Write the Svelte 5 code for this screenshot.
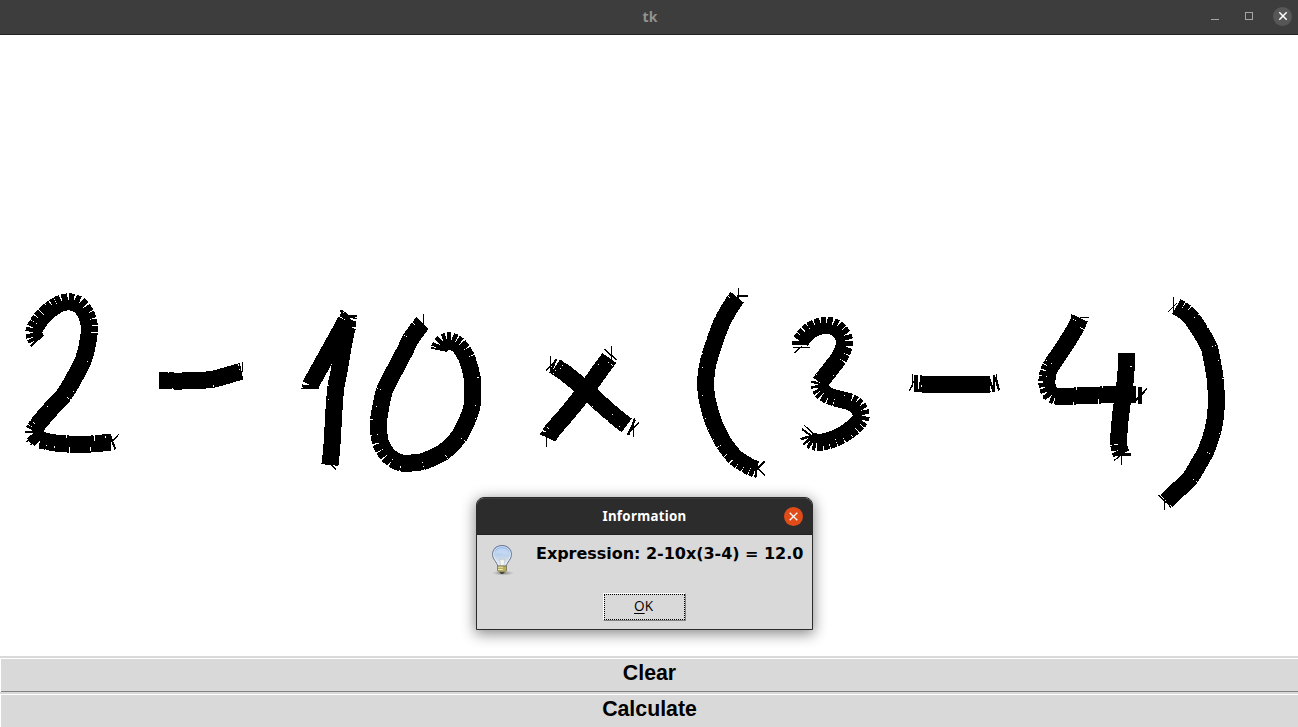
<script>
  // Each stroke is a list of x,y samples in thirds of a pixel, offset by its group's origin.
  const glyphs = [
    { x: 0, y: 280, strokes: [
      '109,180 104,170 101,158 104,146 112,132 121,119 133,106 150,90 160,82 172,75 187,68 205,65 221,67 235,73 248,85 258,102 265,120 268,138 268,157 261,200 250,240 237,267 205,325 192,345 152,388 120,425 111,436 104,446 100,453 100,459 105,465 112,472 121,480 142,485 165,489 197,491 210,493 270,493 285,490 308,489 318,488 332,487',
      '478,301 503,301 520,303 548,303 605,301 637,298 706,279 720,275 725,274'],
      hairs: ['90,198 128,162', '93,200 130,165', '338,483 356,463', '327,463 345,508', '330,463 347,508', '727,247 727,275', '79,487 100,465', '92,495 106,472'] },
    { x: 290, y: 290, strokes: [
      '60,295 61,286 69,271 157,112 168,92 176,82 177,78',
      '173,92 173,110 168,126 146,250 138,290 134,330 124,490 122,506 120,525'],
      hairs: ['33,295 85,295', '150,61 174,82', '155,60 176,78', '93,520 145,521', '115,515 138,538', '150,77 200,77', '150,80 200,80'] },
    { x: 290, y: 290, strokes: [
      '397,100 386,113 379,123 362,147 346,180 325,220 283,303 272,352 266,390 267,433 271,458 280,477 292,494 308,508 334,519 365,519 397,515 428,503 460,487 507,440 537,378 547,345 548,306 547,265 530,203 519,182 506,166 495,158 483,153 472,153 461,157 452,166 448,176 447,181'],
      hairs: ['401,72 401,120', '378,82 402,106'] },
    { x: 520, y: 330, strokes: [
      '106,109 112,113 120,118 143,135 178,163 200,180 233,213 278,253 308,277 320,286',
      '268,84 261,94 247,112 218,153 165,222 135,258 96,303 89,313 85,322'],
      hairs: ['91,78 91,125', '77,122 107,92', '110,87 92,130', '107,87 90,129', '274,49 274,98', '252,57 290,90', '322,313 356,278', '340,267 340,322', '322,315 345,266', '326,315 345,270', '60,311 106,332', '79,302 79,350'] },
    { x: 680, y: 280, strokes: [
      '172,52 163,63 129,120 103,187 90,227 81,265 77,303 79,345 95,410 106,440 120,468 132,490 150,515 165,532 180,543 196,553 213,562 226,567 233,568'],
      hairs: ['175,25 175,58', '170,48 203,48', '231,567 254,543', '234,566 254,546', '231,564 254,586'] },
    { x: 680, y: 280, strokes: [
      '362,196 362,184 370,172 380,160 392,151 408,142 424,137 440,136 456,138 468,144 480,155 490,168 494,182 493,198 486,217 477,235 465,250 446,275 428,297 420,308 418,315 419,323 424,331 432,339 447,348 465,354 490,360 512,366 524,373 534,382 541,393 544,406 541,418 534,428 522,440 505,453 485,466 465,475 445,482 428,486 410,487 400,485 392,480 387,474 385,467'],
      hairs: ['340,202 390,202', '343,218 365,200', '366,446 398,470', '373,436 405,467', '368,450 390,466'] },
    { x: 890, y: 300, strokes: [
      '72,251 84,251', '88,251 95,252 287,253 300,252 306,250', '309,250 315,250',
      '570,54 565,65 560,78 517,148 487,192 481,202 475,215 472,230 470,246 472,260 477,273 486,284 496,288 548,289 562,287 624,286 640,284 738,284',
      '709,159 709,199 704,260 695,320 688,385 686,433 689,450 694,462'],
      hairs: ['67,222 67,260', '71,244 59,272', '320,222 320,255', '314,230 326,272', '318,230 328,270', '543,45 592,70', '570,52 597,52', '746,262 746,312', '750,262 750,312', '753,262 753,312', '735,300 770,265', '737,302 771,267', '672,462 722,462', '672,466 722,466', '672,482 695,463', '694,465 694,495', '458,296 480,275', '461,298 482,278'] },
    { x: 1140, y: 280, strokes: [
      '109,80 116,84 124,88 138,98 157,118 182,155 208,203 217,245 226,298 229,375 225,418 218,455 197,515 177,550 152,592 132,613 105,638 93,650 80,663'],
      hairs: ['100,51 100,103', '85,95 112,68', '73,640 73,690', '54,645 80,668', '67,643 93,683'] },
  ];

  const dir = (a, b) => {
    const l = Math.hypot(b[0] - a[0], b[1] - a[1]) || 1;
    return [(b[0] - a[0]) / l, (b[1] - a[1]) / l];
  };
  const mix = (a, b) => dir([0, 0], [a[0] * 0.75 + b[0] * 0.25, a[1] * 0.75 + b[1] * 0.25]);
  // Every span is its own butt-ended piece; long ones are bent towards their neighbours.
  const segments = (s) => {
    const p = s.split(' ').map((v) => v.split(',').map(Number));
    const tangent = (i) => {
      const a = dir(p[Math.max(i - 1, 0)], p[i]);
      const b = dir(p[i], p[Math.min(i + 1, p.length - 1)]);
      return dir([0, 0], [a[0] + b[0], a[1] + b[1]]);
    };
    let d = '';
    for (let i = 0; i < p.length - 1; i++) {
      const a = p[i], b = p[i + 1];
      const l = Math.hypot(b[0] - a[0], b[1] - a[1]);
      if (l <= 26) {
        d += `M${a}L${b}`;
        continue;
      }
      const chord = dir(a, b);
      const u = mix(tangent(i), chord), v = mix(tangent(i + 1), chord);
      const c1 = [a[0] + u[0] * l / 3, a[1] + u[1] * l / 3];
      const c2 = [b[0] - v[0] * l / 3, b[1] - v[1] * l / 3];
      d += `M${a}C${c1} ${c2} ${b}`;
    }
    return d;
  };
</script>

<main class="window">
  <header class="titlebar">
    <span class="title">tk</span>
    <div class="controls">
      <svg class="crisp" width="9" height="9" viewBox="0 0 9 9"><path d="M1 7.500h8" /></svg>
      <svg class="crisp" width="9" height="9" viewBox="0 0 9 9"><path d="M1.500 .5h7v7h-7z" /></svg>
      <span class="close"><svg width="10" height="10" viewBox="0 0 10 10"><path d="M1.300 1.300l7.400 7.400M8.700 1.300l-7.400 7.400" /></svg></span>
    </div>
  </header>

  <section class="drawing">
    <svg class="ink" width="1298" height="621" viewBox="0 35 1298 621">
      {#each glyphs as g}
        <g transform={`translate(${g.x} ${g.y}) scale(.333333)`}>
          {#each g.strokes as s}<path class="pen" d={segments(s)} />{/each}
          {#each g.hairs as h}<polyline class="hair" points={h} />{/each}
        </g>
      {/each}
    </svg>
  </section>

  <button class="action"><span>Clear</span></button>
  <button class="action"><span>Calculate</span></button>

  <div class="dialog">
    <header class="dialog-title">
      <span>Information</span>
      <i class="dialog-close"><svg width="9" height="9" viewBox="0 0 9 9"><path d="M.7.7l7.600 7.600M8.300.7L.7 8.300" /></svg></i>
    </header>
    <div class="dialog-body">
      <div class="message">
        <svg class="bulb" width="24" height="32" viewBox="0 0 24 32">
          <defs>
            <linearGradient id="glass" x1="0" y1="0" x2="0" y2="1">
              <stop offset="0" stop-color="#83ace4" /><stop offset=".45" stop-color="#b9cfea" /><stop offset="1" stop-color="#e9edf0" />
            </linearGradient>
            <radialGradient id="shade"><stop offset="0" stop-color="#555" stop-opacity=".7" /><stop offset="1" stop-color="#777" stop-opacity="0" /></radialGradient>
          </defs>
          <ellipse cx="13" cy="29" rx="11" ry="2.6" fill="url(#shade)" />
          <path d="M12 1.500C6.200 1.500 2.500 5.400 2.500 10.500c0 5 4.300 7.300 5.400 11.500h8.200c1.100-4.200 5.400-6.500 5.400-11.500 0-5.100-3.700-9-9.500-9z" fill="url(#glass)" stroke="#6f7890" />
          <path d="M12 2.700C7 2.700 3.700 6 3.700 10.500c0 4.300 4 6.500 5 10.500h6.600c1-4 5-6.200 5-10.500 0-4.500-3.300-7.800-8.300-7.800z" fill="none" stroke="#eef4fc" stroke-opacity=".7" />
          <path d="M5 10c0-7 13-8 14 0-4 2-9-2-14 0z" fill="#c8dbf3" opacity=".8" />
          <path d="M10.500 21l-1-6 2 1 1-2 1 2 1.500-1-1 6" fill="#f5f5f1" stroke="#bfc4c8" stroke-width=".7" />
          <path d="M7.500 22h9v4.500l-2 1.500h-5l-2-1.500z" fill="#b5ad62" stroke="#777044" stroke-width=".8" />
          <path d="M8 23.200h5M8 25.500h5" stroke="#eee9b3" />
          <path d="M9.500 28h5l-1.500 2h-2z" fill="#454539" />
        </svg>
        <strong>Expression: 2-10x(3-4) = 12.0</strong>
      </div>
      <button class="ok"><span><u>O</u>K</span></button>
    </div>
  </div>
</main>

<style>
  :global(body) { margin: 0; overflow: hidden; }
  .window { position: relative; display: flex; flex-direction: column; width: 1298px; height: 727px; background: #fff; overflow: hidden; }
  .titlebar { box-sizing: border-box; height: 35px; flex: none; display: grid; grid-template-columns: 1fr auto 1fr; align-items: center; background: #3d3d3d; border-bottom: 1px solid #242424; padding: 0 6px 2px 8px; }
  .title { grid-column: 2; color: #929292; font: bold 14px "Noto Sans", sans-serif; letter-spacing: .2px; }
  .controls { justify-self: end; display: flex; align-items: center; gap: 25px; }
  .controls svg { fill: none; stroke: #a5a5a5; }
  .crisp { shape-rendering: crispEdges; }
  .controls svg + .close { margin-left: -5px; }
  .close { width: 19px; height: 19px; border-radius: 50%; background: #575757; display: flex; align-items: center; justify-content: center; }
  .controls .close svg { stroke: #fff; stroke-width: 1.500; }
  .drawing { height: 621px; flex: none; }
  .ink { display: block; shape-rendering: crispEdges; fill: none; stroke: #000; }
  .pen { stroke-width: 51; }
  .hair { stroke-width: 4; }
  .action { box-sizing: border-box; flex: none; width: 1298px; height: 36px; margin: 0; padding: 0 0 0 1px; border: 0; border-top: 2px solid #d9d9d9; background: #d9d9d9; color: #000; box-shadow: inset 1px 1px #fff, inset 0 -1px #828282; font: bold 21.300px/30px "Liberation Sans", sans-serif; display: flex; justify-content: center; align-items: flex-start; }
  .dialog { position: absolute; box-sizing: border-box; left: 476px; top: 497px; width: 337px; height: 133px; border: 1px solid #2b2b2b; border-radius: 8px 8px 0 0; background: #d9d9d9; box-shadow: 0 3px 14px 1px rgba(0, 0, 0, .46); }
  .dialog-title { box-sizing: border-box; height: 37px; display: grid; grid-template-columns: 1fr auto 1fr; align-items: center; background: #2c2c2c; border-top: 1px solid #3c3c3c; border-bottom: 1px solid #222; border-radius: 7px 7px 0 0; padding: 0 9px 1px; color: #fff; }
  .dialog-title span { grid-column: 2; font: bold 13.300px/20px "Noto Sans", sans-serif; letter-spacing: .3px; }
  .dialog-close { justify-self: end; width: 19px; height: 19px; border-radius: 50%; background: #e04b17; display: flex; align-items: center; justify-content: center; }
  .dialog-close svg { fill: none; stroke: #fff; stroke-width: 1.300; }
  .message { display: flex; height: 58px; padding: 9px 0 0 13px; box-sizing: border-box; }
  .bulb { flex: none; }
  strong { margin-left: 22px; font: bold 16px/19px "DejaVu Sans", sans-serif; letter-spacing: -.03px; white-space: nowrap; }
  .ok { box-sizing: border-box; display: flex; align-items: center; justify-content: center; margin: 0 auto; width: 83px; height: 28px; background: #d9d9d9; border: 1px solid #fff; border-right-color: #828282; border-bottom-color: #828282; padding: 0 2px 2px 0; outline: 1px dotted #000; outline-offset: -2px; font: 13.600px/16px "Open Sans", sans-serif; color: #000; }
  .ok u { text-underline-offset: 2px; }
</style>
